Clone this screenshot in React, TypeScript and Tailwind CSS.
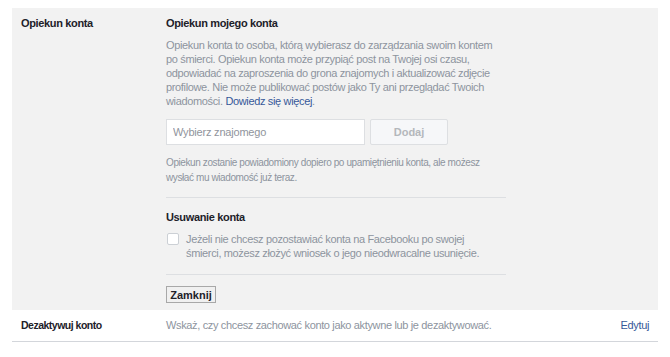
import React from "react";

export default function App() {
  return (
    <div className="w-[670px] h-[357px] bg-white pt-[8px] pl-[12px] font-['Liberation_Sans',Arial,sans-serif] text-[11px] tracking-[-0.35px]">
      <div className="w-[646px]">
        {/* Expanded section */}
        <div className="flex bg-[#f2f2f2] pt-[7px] pb-[7px]">
          <div className="w-[154px] pl-[9px] font-bold text-[#1d2129] leading-[16px]">Opiekun konta</div>
          <div className="w-[360px]">
            <div className="font-bold text-[#1d2129] leading-[16px]">Opiekun mojego konta</div>
            <p className="mt-[7px] text-[#8d949e] leading-[14px]">
              Opiekun konta to osoba, którą wybierasz do zarządzania swoim kontem
              <br />
              po śmierci. Opiekun konta może przypiąć post na Twojej osi czasu,
              <br />
              odpowiadać na zaproszenia do grona znajomych i aktualizować zdjęcie
              <br />
              profilowe. Nie może publikować postów jako Ty ani przeglądać Twoich
              <br />
              wiadomości. <a className="text-[#365899]">Dowiedz się więcej</a>.
            </p>
            <div className="flex gap-[5px] mt-[11px]">
              <input
                placeholder="Wybierz znajomego"
                className="w-[199px] h-[26px] bg-white border border-[#dddfe2] px-[6px] text-[11px] tracking-[-0.2px] placeholder-[#90949c] outline-none"
              />
              <button className="w-[78px] h-[26px] bg-[#f6f7f9] border border-[#dddfe2] rounded-[2px] text-[#b4b7bc] font-bold tracking-[0px]">
                Dodaj
              </button>
            </div>
            <p className="mt-[10px] text-[10px] tracking-[-0.4px] leading-[15px] text-[#8d949e]">
              Opiekun zostanie powiadomiony dopiero po upamiętnieniu konta, ale możesz
              <br />
              wysłać mu wiadomość już teraz.
            </p>
            <div className="mt-[12px] w-[340px] border-t border-[#dddfe2]" />
            <div className="mt-[11px] font-bold text-[#1d2129] leading-[16px]">Usuwanie konta</div>
            <div className="flex mt-[7px]">
              <span className="w-[12px] h-[12px] mt-[1px] ml-[1px] mr-[7px] shrink-0 rounded-[2px] border border-[#ccd0d5] bg-white" />
              <p className="text-[#8d949e] leading-[14px]">
                Jeżeli nie chcesz pozostawiać konta na Facebooku po swojej
                <br />
                śmierci, możesz złożyć wniosek o jego nieodwracalne usunięcie.
              </p>
            </div>
            <div className="mt-[14px] w-[340px] border-t border-[#dddfe2]" />
            <button className="mt-[11px] h-[17px] w-[50px] bg-[#f0f0f0] border border-[#a8a8a8] text-[#1d2129] font-bold leading-[14px] tracking-[0px]">
              Zamknij
            </button>
          </div>
        </div>
        {/* Collapsed row */}
        <div className="flex items-center h-[32px] border-b border-[#d3d6db]">
          <div className="w-[154px] pl-[9px] font-bold text-[10.5px] tracking-[-0.5px] text-[#1d2129]">Dezaktywuj konto</div>
          <div className="flex-1 text-[#8d949e]">Wskaż, czy chcesz zachować konto jako aktywne lub je dezaktywować.</div>
          <a className="pr-[9px] text-[#365899]">Edytuj</a>
        </div>
      </div>
    </div>
  );
}
